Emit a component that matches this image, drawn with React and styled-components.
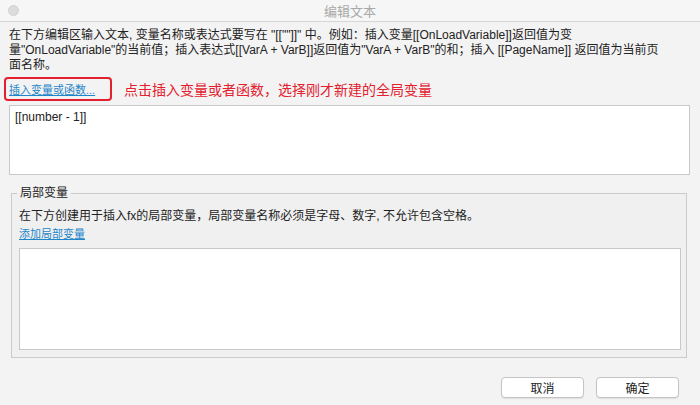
import React from 'react';
import styled, { createGlobalStyle } from 'styled-components';

const Global = createGlobalStyle`
  html, body {
    margin: 0;
    padding: 0;
    background: #f3f3f3;
  }
  body {
    font-family: "Liberation Sans", "Noto Sans CJK SC", sans-serif;
    font-size: 12px;
    color: #222;
  }
`;

const Window = styled.div`
  width: 700px;
  height: 405px;
  display: flex;
  flex-direction: column;
  background: #f3f3f3;
  overflow: hidden;
`;

const TitleBar = styled.div`
  height: 22px;
  display: grid;
  grid-template-columns: 40px 1fr 40px;
  align-items: center;
  background: #f6f6f6;
  border-bottom: 1px solid #d6d6d6;
  box-sizing: border-box;
`;

const Light = styled.span`
  width: 11px;
  height: 11px;
  margin-left: 8px;
  border-radius: 50%;
  background: #dcdcdc;
  border: 1px solid #d0d0d0;
  box-sizing: border-box;
`;

const Title = styled.div`
  text-align: center;
  color: #a8a8a8;
  font-size: 13px;
`;

const Body = styled.div`
  flex: 1;
  display: flex;
  flex-direction: column;
  padding: 6px 10px 0 9px;
`;

const Intro = styled.p`
  margin: 0;
  font-size: 12px;
  line-height: 15px;
  white-space: nowrap;
`;

const LinkRow = styled.div`
  display: flex;
  align-items: center;
  margin: 4px 0 4px -5px;
  height: 24px;
`;

const Highlight = styled.div`
  height: 24px;
  width: 108px;
  box-sizing: border-box;
  border: 2px solid #e3202e;
  border-radius: 4px;
  display: flex;
  align-items: center;
  padding-left: 3px;
`;

const Link = styled.a`
  color: #1f86c9;
  font-size: 11px;
  text-decoration: underline;
  cursor: pointer;
`;

const Note = styled.span`
  margin-left: 12px;
  color: #e3202e;
  font-size: 14px;
`;

const Editor = styled.div`
  height: ${p => p.$h}px;
  box-sizing: border-box;
  background: #fff;
  border: 1px solid #c9c9c9;
  padding: 4px 5px;
  font-size: 12px;
  line-height: 14px;
`;

const Group = styled.fieldset`
  margin: 11px 3px 0 2px;
  padding: 2px 5px 7px 7px;
  border: 1px solid #cbcbcb;
  background: #f0f0f0;
  display: flex;
  flex-direction: column;
`;

const Legend = styled.legend`
  padding: 0 3px;
  margin-left: -2px;
  font-size: 12px;
  line-height: 14px;
`;

const Hint = styled.div`
  font-size: 12px;
  line-height: 16px;
  margin-top: 6px;
`;

const SubLink = styled(Link)`
  display: block;
  margin-top: 2px;
  line-height: 16px;
`;

const Footer = styled.div`
  display: flex;
  justify-content: flex-end;
  gap: 12px;
  padding: 19px 11px 0 0;
`;

const Button = styled.button`
  width: 83px;
  height: 21px;
  background: #fff;
  border: 1px solid #c4c4c4;
  border-radius: 4px;
  font-family: "Noto Sans CJK SC", sans-serif;
  font-size: 12px;
  color: #222;
  padding: 0;
  box-shadow: 0 1px 1px rgba(0, 0, 0, 0.08);
`;

export default function App() {
  return (
    <Window>
      <Global />
      <TitleBar>
        <Light />
        <Title>编辑文本</Title>
        <span />
      </TitleBar>
      <Body>
        <Intro>
          在下方编辑区输入文本, 变量名称或表达式要写在 "[[""]]" 中。例如：插入变量[[OnLoadVariable]]返回值为变
          <br />
          量"OnLoadVariable"的当前值；插入表达式[[VarA + VarB]]返回值为"VarA + VarB"的和；插入 [[PageName]] 返回值为当前页
          <br />
          面名称。
        </Intro>
        <LinkRow>
          <Highlight>
            <Link>插入变量或函数...</Link>
          </Highlight>
          <Note>点击插入变量或者函数，选择刚才新建的全局变量</Note>
        </LinkRow>
        <Editor $h={70}>[[number - 1]]</Editor>
        <Group>
          <Legend>局部变量</Legend>
          <Hint>在下方创建用于插入fx的局部变量，局部变量名称必须是字母、数字, 不允许包含空格。</Hint>
          <SubLink>添加局部变量</SubLink>
          <Editor $h={102} style={{ marginTop: 6 }} />
        </Group>
        <Footer>
          <Button>取消</Button>
          <Button>确定</Button>
        </Footer>
      </Body>
    </Window>
  );
}
